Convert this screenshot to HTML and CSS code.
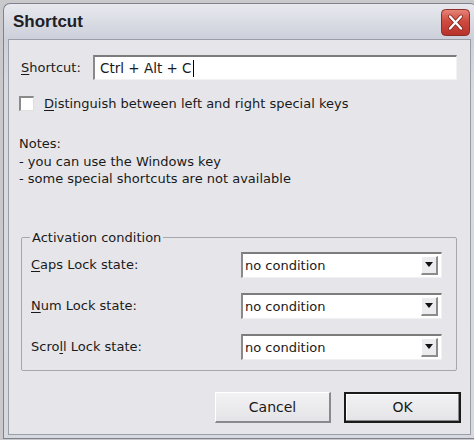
FILE: index.html
```html
<!DOCTYPE html>
<html lang="en">
<head>
  <meta charset="UTF-8" />
  <title>Shortcut</title>
  <link rel="stylesheet" href="styles.css">
</head>
<body>

  <div class="window">
    <!-- Title bar -->
    <div class="titlebar">
      <span class="title">Shortcut</span>
      <div class="close-btn">
        <svg width="29" height="27" viewBox="0 0 29 27">
          <defs>
            <linearGradient id="redGrad" x1="0" y1="0" x2="0" y2="1">
              <stop offset="0" stop-color="#e7867a" />
              <stop offset="0.45" stop-color="#cf4a3e" />
              <stop offset="1" stop-color="#b8322c" />
            </linearGradient>
          </defs>
          <rect x="0.5" y="0.5" width="28" height="26" rx="4" fill="url(#redGrad)" stroke="#8c2e2a" />
          <path d="M9 7.5 L20 19.5 M20 7.5 L9 19.5" stroke="#7a2420" stroke-width="4" stroke-linecap="round" />
          <path d="M9 7.5 L20 19.5 M20 7.5 L9 19.5" stroke="#ffffff" stroke-width="2.4" stroke-linecap="round" />
        </svg>
      </div>
    </div>

    <!-- Client area -->
    <div class="client">
      <div class="shortcut-row">
        <span class="label"><u>S</u>hortcut:</span>
        <div class="text-box">Ctrl + Alt + C<span class="caret"></span></div>
      </div>

      <div class="check-row">
        <div class="checkbox"></div>
        <span><u>D</u>istinguish between left and right special keys</span>
      </div>

      <div class="notes">
        <p>Notes:</p>
        <p>- you can use the Windows key</p>
        <p>- some special shortcuts are not available</p>
      </div>

      <fieldset class="group">
        <legend>Activation condition</legend>
        <div class="cond-row">
          <span><u>C</u>aps Lock state:</span>
          <div class="combo">
            <span>no condition</span>
            <div class="combo-btn"><div class="arrow"></div></div>
          </div>
        </div>
        <div class="cond-row">
          <span><u>N</u>um Lock state:</span>
          <div class="combo">
            <span>no condition</span>
            <div class="combo-btn"><div class="arrow"></div></div>
          </div>
        </div>
        <div class="cond-row">
          <span>Scro<u>l</u>l Lock state:</span>
          <div class="combo">
            <span>no condition</span>
            <div class="combo-btn"><div class="arrow"></div></div>
          </div>
        </div>
      </fieldset>

      <div class="button-row">
        <div class="button">Cancel</div>
        <div class="button default">OK</div>
      </div>
    </div>
  </div>

</body>
</html>
```

FILE: styles.css
```css
* { margin: 0; padding: 0; box-sizing: border-box; }

body {
  font-family: "DejaVu Sans", Verdana, sans-serif;
  font-size: 13px;
  color: #1a1a1a;
  background: #c9c9cc;
  height: 440px;
  overflow: hidden;
}

u { text-decoration: underline; text-underline-offset: 2px; }

.window {
  margin: 3px 0 0 3px;
  width: 474px;
  height: 436px;
  border: 1px solid #7f828e;
  border-right: none;
  border-radius: 7px 7px 0 0;
  background: linear-gradient(#e8e9ef, #cdd0da 8%, #d9dbe3 20%, #d7d9e1);
  padding: 0 0 3px 4px;
  display: flex;
  flex-direction: column;
}

.titlebar {
  height: 35px;
  display: flex;
  align-items: center;
  justify-content: space-between;
  padding: 1px 4px 0 5px;
  margin-right: 3px;
}

.title {
  font-family: "Liberation Sans", Arial, sans-serif;
  font-size: 17px;
  font-weight: bold;
  color: #202024;
}

.close-btn {
  width: 29px;
  height: 27px;
  display: flex;
}

.client {
  flex: 1;
  width: 463px;
  background: #e6e6ea;
  border: 1px solid #9a9ca6;
  padding: 15px 0 0 0;
  display: flex;
  flex-direction: column;
}

.shortcut-row {
  display: flex;
  align-items: center;
  padding-left: 12px;
}

.shortcut-row .label {
  width: 72px;
}

.text-box {
  width: 364px;
  height: 25px;
  background: #ffffff;
  border-top: 2px solid #7c7c7c;
  border-left: 2px solid #8a8a8a;
  border-right: 1px solid #f2f2f2;
  border-bottom: 1px solid #f2f2f2;
  padding-left: 5px;
  display: flex;
  align-items: center;
  font-size: 13.5px;
}

.caret {
  width: 1px;
  height: 17px;
  background: #000;
  margin-left: 1px;
}

.check-row {
  display: flex;
  align-items: center;
  gap: 10px;
  padding-left: 10px;
  margin-top: 16px;
}

.checkbox {
  width: 15px;
  height: 15px;
  background: #ffffff;
  border-top: 2px solid #8a8a8a;
  border-left: 2px solid #8a8a8a;
  border-right: 1px solid #e0e0e0;
  border-bottom: 1px solid #e0e0e0;
}

.notes {
  margin-top: 24px;
  padding-left: 10px;
  line-height: 17.5px;
}

.group {
  margin: 42px 0 0 12px;
  width: 436px;
  border: 1px solid #a6a6ac;
  border-radius: 2px;
  padding: 7px 14px 10px 9px;
  display: flex;
  flex-direction: column;
  gap: 15px;
}

.group legend {
  padding: 0 2px;
  margin-left: -1px;
}

.cond-row {
  display: flex;
  align-items: center;
  justify-content: space-between;
  height: 26px;
}

.combo {
  width: 201px;
  height: 26px;
  background: #ffffff;
  border-top: 2px solid #7c7c7c;
  border-left: 2px solid #8a8a8a;
  border-right: 1px solid #f0f0f0;
  border-bottom: 1px solid #f0f0f0;
  display: flex;
  align-items: center;
  justify-content: space-between;
  padding: 0 3px 0 2px;
}

.combo-btn {
  width: 17px;
  height: 19px;
  background: #ececee;
  border-top: 1px solid #ffffff;
  border-left: 1px solid #ffffff;
  border-right: 2px solid #8c8c8c;
  border-bottom: 2px solid #8c8c8c;
  display: flex;
  align-items: center;
  justify-content: center;
}

.arrow {
  width: 0;
  height: 0;
  border-left: 4px solid transparent;
  border-right: 4px solid transparent;
  border-top: 5px solid #111;
}

.button-row {
  display: flex;
  justify-content: flex-end;
  gap: 13px;
  padding-right: 9px;
  margin-top: 21px;
}

.button {
  width: 116px;
  height: 31px;
  background: linear-gradient(#f2f2f4, #e4e4e8);
  border-top: 1px solid #ffffff;
  border-left: 1px solid #ffffff;
  border-right: 2px solid #8a8a8e;
  border-bottom: 2px solid #8a8a8e;
  display: flex;
  align-items: center;
  justify-content: center;
  font-size: 14px;
}

.button.default {
  width: 117px;
  border: 2px solid #1a1a1a;
  box-shadow: inset -1px -1px 0 #8a8a8e, inset 1px 1px 0 #ffffff;
}
```
